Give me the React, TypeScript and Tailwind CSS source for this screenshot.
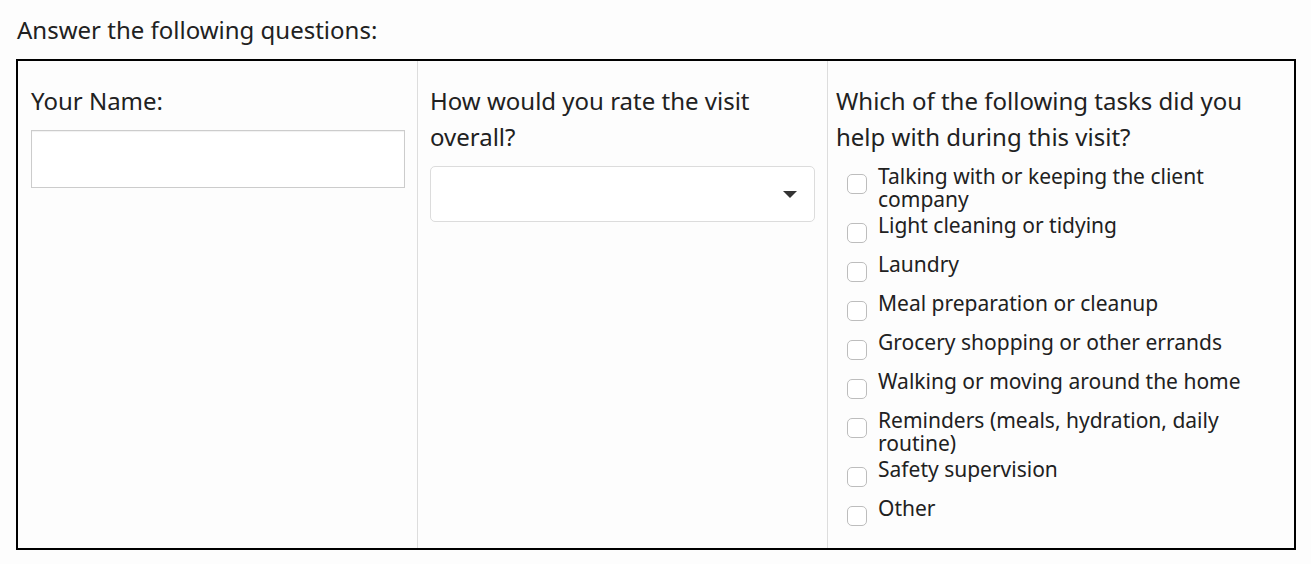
const tasks = [
  "Talking with or keeping the client company",
  "Light cleaning or tidying",
  "Laundry",
  "Meal preparation or cleanup",
  "Grocery shopping or other errands",
  "Walking or moving around the home",
  "Reminders (meals, hydration, daily routine)",
  "Safety supervision",
  "Other",
];

export default function App() {
  return (
    <div
      className="min-h-screen bg-[#fdfdfd] text-[#212121] px-4 pt-4"
      style={{ fontFamily: '"Noto Sans", "Open Sans", sans-serif' }}
    >
      <h1 className="text-[24px] leading-[28px] pl-px mb-[15px]">
        Answer the following questions:
      </h1>

      <div className="flex w-[1280px] border-2 border-black">
        <div className="w-[399px] shrink-0 pl-[13px] pr-3 pt-[22px]">
          <label className="block text-[24px] leading-[36px]">Your Name:</label>
          <input
            type="text"
            className="mt-[11px] block w-full h-[58px] border border-[#cccccc] bg-white shadow-[inset_0_1px_1px_rgba(0,0,0,0.06)] outline-none px-3"
          />
        </div>

        <div className="w-[410px] shrink-0 border-l border-[#dddddd] pl-3 pr-3 pt-[22px]">
          <label className="block text-[24px] leading-[36px]">
            How would you rate the visit overall?
          </label>
          <div className="mt-[11px] relative h-[56px] w-[385px] rounded-[5px] border border-[#dcdcdc] bg-white">
            <svg
              className="absolute right-[17px] top-[24px]"
              width="14"
              height="8"
              viewBox="0 0 14 8"
            >
              <path d="M0 0 L14 0 L7 7 Z" fill="#333" />
            </svg>
          </div>
        </div>

        <div className="flex-1 border-l border-[#dddddd] pl-2 pr-[20px] pt-[22px] pb-[12px]">
          <label className="block text-[24px] leading-[36px]">
            Which of the following tasks did you help with during this visit?
          </label>
          <div className="mt-[10px] pl-[11px]">
            {tasks.map((t) => (
              <div key={t} className="flex items-start mb-1">
                <span className="mt-[9px] mb-[6px] h-5 w-5 shrink-0 rounded-[5px] border border-[#bdbdbd] bg-white" />
                <span className="ml-[11px] text-[21px] leading-[22.5px]">{t}</span>
              </div>
            ))}
          </div>
        </div>
      </div>
    </div>
  );
}
